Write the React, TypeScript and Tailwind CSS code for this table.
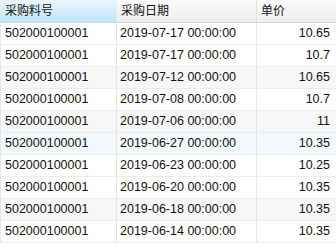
const rows = [
  ["2019-07-17 00:00:00", "10.65"],
  ["2019-07-17 00:00:00", "10.7"],
  ["2019-07-12 00:00:00", "10.65"],
  ["2019-07-08 00:00:00", "10.7"],
  ["2019-07-06 00:00:00", "11"],
  ["2019-06-27 00:00:00", "10.35"],
  ["2019-06-23 00:00:00", "10.25"],
  ["2019-06-20 00:00:00", "10.35"],
  ["2019-06-18 00:00:00", "10.35"],
  ["2019-06-14 00:00:00", "10.35"],
];

// row tints: striped rows and the hovered one
const rowBg = (i: number) => {
  if (i === 5) return "bg-[#f2f8fd]";
  if (i === 2 || i === 4 || i === 8) return "bg-[#f7f7f7]";
  return "bg-white";
};

export default function App() {
  return (
    <div className="w-[336px] h-[248px] bg-white overflow-hidden font-['Liberation_Sans','Noto_Sans_CJK_SC',sans-serif] text-[12.5px] text-[#111]">
      {/* header */}
      <div className="grid grid-cols-[117px_140px_1fr] h-[23px] border-b border-[#d5d5d5]">
        <div className="flex items-center pl-[5px] border-r border-[#e2eef5] bg-gradient-to-b from-[#eaf7fe] to-[#bfe4f8] text-[12px]">
          采购料号
        </div>
        <div className="flex items-center pl-[4px] border-r border-[#e0e0e0] bg-gradient-to-b from-[#fbfbfb] to-[#eeeeee] text-[12px]">
          采购日期
        </div>
        <div className="flex items-center pl-[4px] bg-gradient-to-b from-[#fbfbfb] to-[#eeeeee] text-[12px]">
          单价
        </div>
      </div>

      {/* body */}
      {rows.map(([date, price], i) => (
        <div
          key={i}
          className={`grid grid-cols-[117px_140px_1fr] h-[22px] border-b border-[#ececec] ${rowBg(i)}`}
        >
          <div className="flex items-center pl-[4px] border-l border-r border-[#e6e6e6]">502000100001</div>
          <div className="flex items-center pl-[3px] border-r border-[#e6e6e6]">{date}</div>
          <div className="flex items-center justify-end pr-[6px]">{price}</div>
        </div>
      ))}
    </div>
  );
}
